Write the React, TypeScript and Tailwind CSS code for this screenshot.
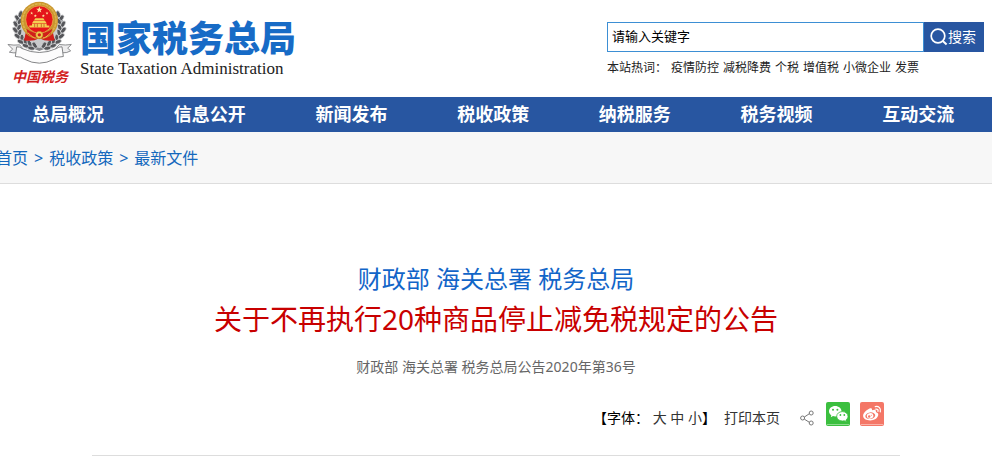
import { clsx } from 'clsx'

const NAV_ITEMS = ['总局概况', '信息公开', '新闻发布', '税收政策', '纳税服务', '税务视频', '互动交流']
const HOT_WORDS = ['疫情防控', '减税降费', '个税', '增值税', '小微企业', '发票']
const CRUMBS = ['首页', '税收政策', '最新文件']
const FONT_SIZES = ['大', '中', '小']

const STAR = 'M0 -10 L2.4 -3.2 9.5 -3.1 3.8 1.2 5.9 8.1 0 4 -5.9 8.1 -3.8 1.2 -9.5 -3.1 -2.4 -3.2 Z'

// Leaves of the left half of the wreath: x, y, angle
const LEAVES = [
  [61, 46, 20], [52, 58, -35], [59, 68, 30], [47, 76, -30], [57, 86, 25], [46, 94, -40],
  [59, 102, 15], [52, 112, -50], [66, 117, 0], [62, 129, -65], [76, 128, -15], [77, 141, -70],
  [89, 134, -30], [94, 148, -80], [104, 139, -35],
]

function Leaves() {
  return (
    <g fill="#55565a" stroke="#e4e5e6" strokeWidth="2">
      {LEAVES.map(([x, y, r], i) => (
        <ellipse key={i} cx={x} cy={y} rx="6" ry="11" transform={`rotate(${r} ${x} ${y})`} />
      ))}
    </g>
  )
}

function Emblem() {
  return (
    <svg viewBox="18 4 204 194" className="h-[65px] w-[68px]" aria-hidden="true">
      <path d="M64 44C34 76 50 132 118 152 186 132 202 76 172 44" fill="#c9cacc" stroke="#85868a" strokeWidth="8" />
      <Leaves />
      <g transform="translate(236 0) scale(-1 1)">
        <Leaves />
      </g>
      {/* National emblem */}
      <path d="M78 98 72 124q26 5 46-6 20 11 46 6L158 98Z" fill="#d21e1a" />
      <circle cx="118" cy="65" r="56" fill="#c9952e" />
      <circle cx="118" cy="65" r="50" fill="none" stroke="#dcb24a" strokeWidth="5" strokeDasharray="9 2" />
      <circle cx="118" cy="62" r="41" fill="#e5151a" stroke="#edc550" strokeWidth="2" />
      <path d={STAR} transform="translate(118 33)" fill="#ffe9a0" />
      <g fill="#ffe9a0">
        <path d={STAR} transform="translate(95 43) scale(.5)" />
        <path d={STAR} transform="translate(106 51) scale(.5)" />
        <path d={STAR} transform="translate(130 51) scale(.5)" />
        <path d={STAR} transform="translate(141 43) scale(.5)" />
      </g>
      <path d="M106 58h24l4 6h-32zM101 66h34l5 7H96zM96 75h44v5h8v6H88v-6h8z" fill="#f5cf52" />
      <path d="M104 75v10M112 75v10M124 75v10M132 75v10" stroke="#b5441a" strokeWidth="2" />
      <path d="M79 90q39 28 78 0l-5 16q-34 25-68 0z" fill="#d21e1a" />
      <circle cx="118" cy="108" r="11" fill="#efc64c" stroke="#9b6514" strokeWidth="2" strokeDasharray="3 2" />
      <circle cx="118" cy="108" r="5" fill="#d21e1a" />
      <path d="M84 102q17 17 23 15M152 102q-17 17-23 15" fill="none" stroke="#f0c14a" strokeWidth="3" />
      {/* Ribbon */}
      <path
        d="M24 137q18 3 35 1l9 11-18 13q-10 1-22-2l10-9zM214 137q-18 3-36 0l-11 12 20 13q14 1 25-6l-9-8z"
        fill="#ededee"
        stroke="#77787b"
        strokeWidth="2.500"
      />
      <path
        d="M50 144q10-1 16 5 52 24 104 0 6-6 16-5l4 29q-16 0-27 8-45 24-90 0-10-8-27-8z"
        fill="#fcfcfc"
        stroke="#6c6d70"
        strokeWidth="2.500"
      />
    </svg>
  )
}

function SearchIcon() {
  return (
    <svg viewBox="0 0 18 18" className="size-[18px]" fill="none" stroke="#fff" strokeWidth="1.7" aria-hidden="true">
      <circle cx="8" cy="8" r="6.8" />
      <path d="m12.8 13 3.8 3.4" strokeWidth="2" />
    </svg>
  )
}

function ShareIcon() {
  return (
    <svg viewBox="0 0 14 16" className="h-4 w-3.5" fill="none" stroke="#777" aria-hidden="true">
      <path d="m4.4 7 4.8-3.2M4.4 9.2l4.8 3" />
      <circle cx="2.6" cy="8" r="2" />
      <circle cx="11.2" cy="3" r="2" />
      <circle cx="11.2" cy="13" r="2" />
    </svg>
  )
}

function WechatIcon() {
  return (
    <svg viewBox="0 0 24 24" className="size-6" aria-hidden="true">
      <rect width="24" height="24" rx="2" fill="#3bbf3f" />
      <path d="M1 22.5h22" stroke="#8edb8f" />
      <path d="M9.2 4C5.700 4 3 6.300 3 9.200c0 1.700.9 3.100 2.300 4.100L4.800 15.300l2.200-1.200c.7.2 1.400.3 2.200.3 3.500 0 6.300-2.300 6.300-5.200S12.700 4 9.200 4Z" fill="#fff" />
      <path d="M16.300 9.600c-3.200 0-5.600 2.100-5.600 4.700s2.400 4.700 5.600 4.700c.7 0 1.300-.1 1.900-.3l2.200 1.200-.5-1.900c1.300-.9 2.100-2.200 2.100-3.700 0-2.600-2.500-4.700-5.700-4.700Z" fill="#fff" stroke="#3bbf3f" strokeWidth=".8" />
      <g fill="#3bbf3f">
        <circle cx="7" cy="7.8" r="1" />
        <circle cx="11.4" cy="7.8" r="1" />
        <circle cx="14.4" cy="13" r=".9" />
        <circle cx="18.3" cy="13" r=".9" />
      </g>
    </svg>
  )
}

function WeiboIcon() {
  return (
    <svg viewBox="0 0 24 24" className="size-6" aria-hidden="true">
      <rect width="24" height="24" rx="2" fill="#f47767" />
      <path d="M1 22.5h22" stroke="#fab3a9" />
      <path d="M9.500 6.600c1.500-.8 2.800-.3 2.500 1.600 2-.9 4.200-.8 3.900 1.300-.1.500.1.700.7.900 1.400.5 1.900 1.500 1.600 2.800-.6 2.900-3.900 5.200-8 5.200-4 0-7.100-1.700-7.100-4.600 0-2.600 3.100-5.500 6.400-7.200Z" fill="#fff" />
      <ellipse cx="10.3" cy="13.7" rx="5" ry="3.3" fill="#f47767" transform="rotate(-8 10.3 13.7)" />
      <ellipse cx="10.1" cy="13.9" rx="3.3" ry="2.7" fill="#fff" transform="rotate(-15 10.1 13.9)" />
      <circle cx="9.2" cy="14.5" r="1.2" fill="#f47767" />
      <circle cx="11.3" cy="13.3" r=".5" fill="#f47767" />
      <path d="M15.3 4.600c3.300-.8 6 1.900 5 5.200M15.800 7.100c1.500-.3 2.600.8 2.200 2.300" fill="none" stroke="#fff" strokeWidth="1.3" strokeLinecap="round" />
    </svg>
  )
}

function Header() {
  return (
    <header className="flex items-start justify-between pl-1.5 pr-2">
      <a href="#" className="flex h-[97px] items-start gap-1.5">
        <div className="flex flex-col items-center">
          <Emblem />
          <span className="text-sm/6 font-bold italic text-[#d3201f]">中国税务</span>
        </div>
        <div className="pt-[19px]">
          <div className="text-4xl/10 font-black text-[#176bc6]">国家税务总局</div>
          <div className="font-['Liberation_Serif',serif] text-[17px]/5 text-[#222]">State Taxation Administration</div>
        </div>
      </a>
      <div className="w-[377px] pt-[22px]">
        <form className="flex h-[30px]" onSubmit={(e) => e.preventDefault()}>
          <input
            type="text"
            aria-label="请输入关键字"
            defaultValue="请输入关键字"
            className="min-w-0 flex-1 border border-[#3d8fd4] bg-white px-1 text-[13px] text-black outline-none"
          />
          <button type="submit" className="flex items-center bg-[#2856a1] pl-1.5 pr-2 text-sm text-white">
            <SearchIcon />
            搜索
          </button>
        </form>
        <div className="mt-1.5 flex gap-1 text-xs/5 text-[#222]">
          <span>本站热词：</span>
          {HOT_WORDS.map((word) => (
            <a key={word} href="#">{word}</a>
          ))}
        </div>
      </div>
    </header>
  )
}

export default function App() {
  return (
    <div className="min-h-screen overflow-x-hidden bg-white font-['Noto_Sans','Noto_Sans_CJK_SC',sans-serif]">
      <Header />

      <nav className="grid grid-cols-7 bg-[#2856a1]">
        {NAV_ITEMS.map((item) => (
          <a key={item} href="#" className="pl-8 text-lg/[35px] font-bold text-white">{item}</a>
        ))}
      </nav>

      {/* Breadcrumb */}
      <div className="flex h-[52px] items-center border-b border-[#ddd] bg-[#f7f7f7] text-base text-[#1468bd]">
        {CRUMBS.map((crumb, i) => (
          <span key={crumb} className={clsx('flex', i === 0 && '-ml-1')}>
            {i > 0 && <span className="px-1.5">&gt;</span>}
            <a href="#">{crumb}</a>
          </span>
        ))}
      </div>

      <main className="mx-[92px] border-b border-[#ddd] pt-[75px] text-center">
        <h2 className="text-2xl/10 text-[#1265c8]">财政部 海关总署 税务总局</h2>
        <h1 className="text-[28px]/10 text-[#c80000]">关于不再执行20种商品停止减免税规定的公告</h1>
        <p className="mt-4 text-sm/6 text-[#666]">财政部 海关总署 税务总局公告2020年第36号</p>

        <div className="flex items-start justify-end pb-[27px] pr-4 pt-[23px] text-sm text-[#333]">
          <div className="flex gap-2 pt-1.5">
            <div className="text-black">
              【字体：{' '}
              {FONT_SIZES.map((size, i) => (
                <span key={size}>
                  {i > 0 && ' '}
                  <button type="button" className="text-[#333]">{size}</button>
                </span>
              ))}
              】
            </div>
            <button type="button">打印本页</button>
          </div>
          <button type="button" aria-label="分享" className="ml-5 mt-2">
            <ShareIcon />
          </button>
          <button type="button" aria-label="微信" className="ml-3">
            <WechatIcon />
          </button>
          <button type="button" aria-label="微博" className="ml-2.5">
            <WeiboIcon />
          </button>
        </div>
      </main>
    </div>
  )
}
